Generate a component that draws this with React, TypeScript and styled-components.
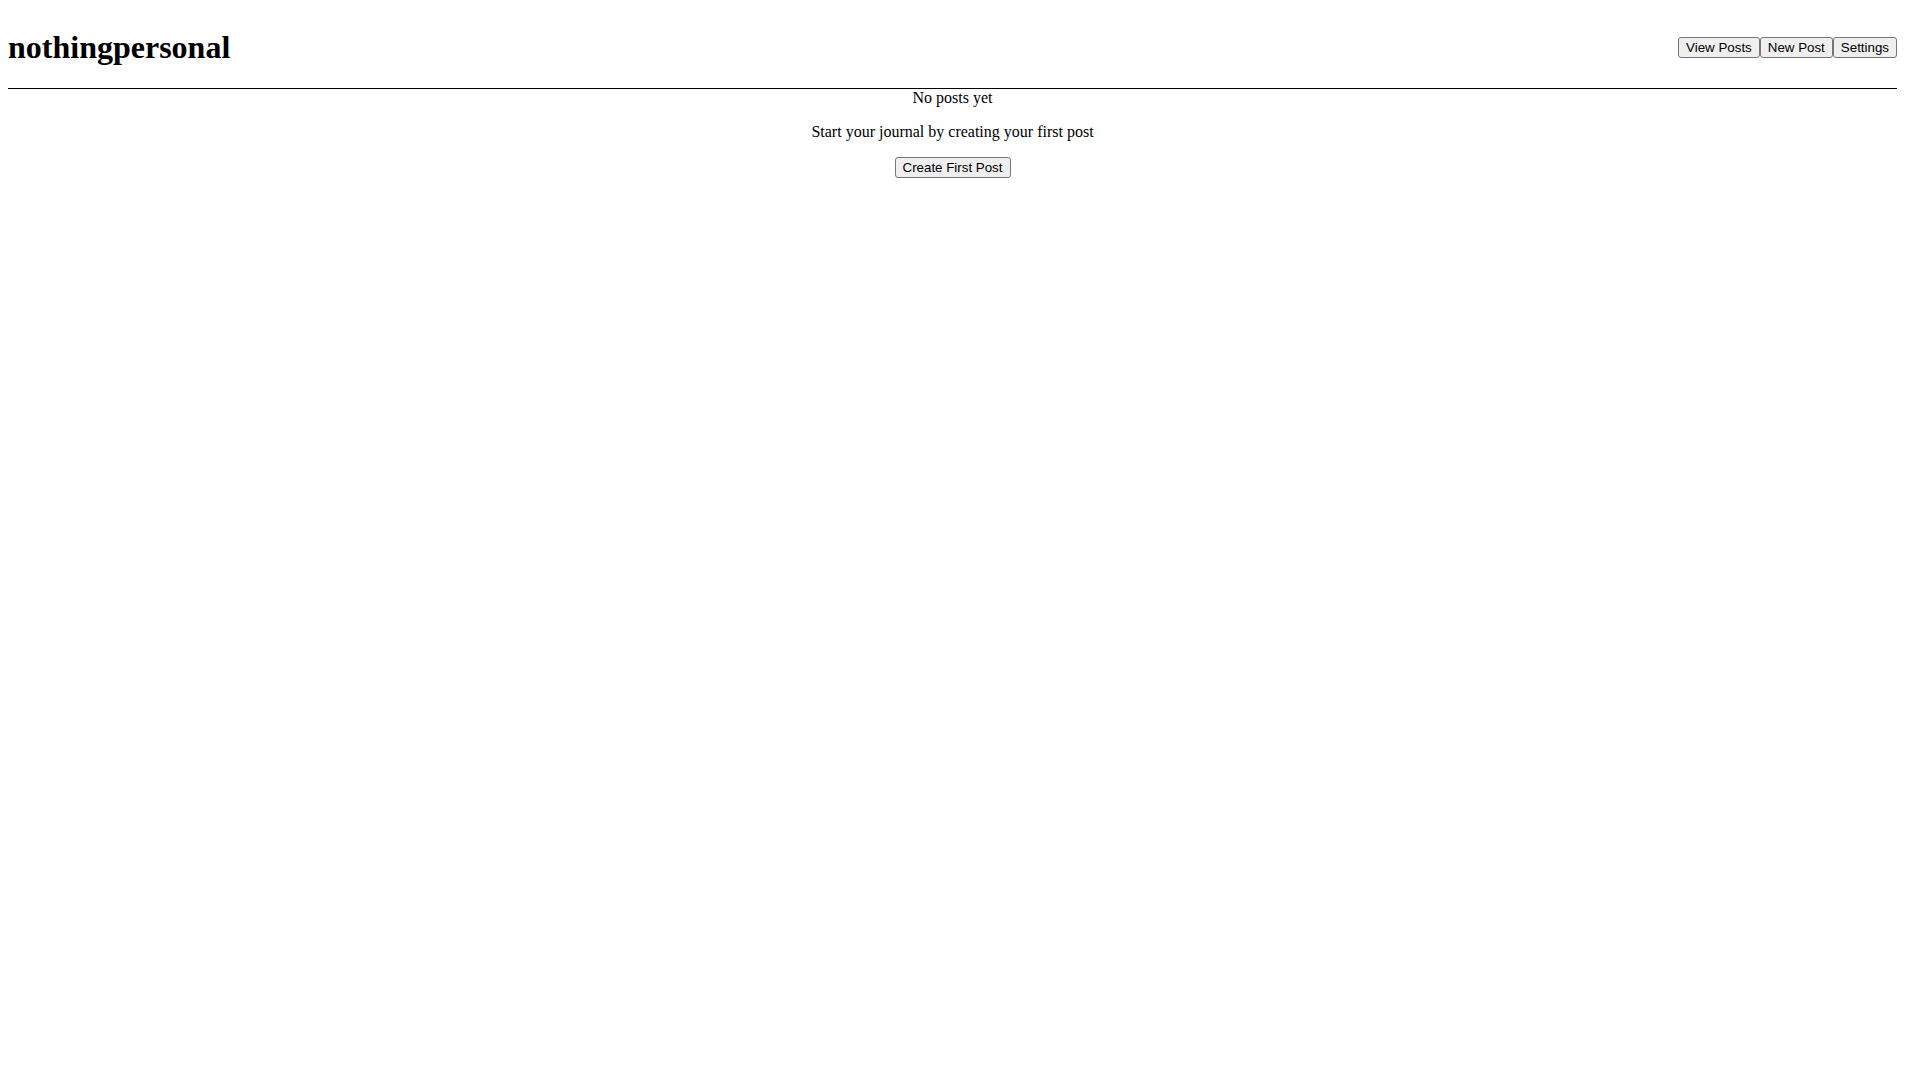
import React from 'react';
import styled, { createGlobalStyle } from 'styled-components';

// the reference was taken with a classic 15px scrollbar; keep that width free
const GlobalStyle = createGlobalStyle`
  body {
    margin: 8px 23px 8px 8px;
    font-family: "Liberation Serif", "Times New Roman", serif;
    font-size: 16px;
    color: #000;
    background: #fff;
  }
`;

const Page = styled.div`
  min-height: 100vh;
`;

const Header = styled.header`
  display: flex;
  justify-content: space-between;
  align-items: center;
  border-bottom: 1px solid #000;
`;

const Logo = styled.h1`
  font-size: 32px;
  font-weight: 700;
  margin: 21.44px 0;
`;

const Nav = styled.nav`
  display: flex;
`;

const Button = styled.button`
  font-family: "Liberation Sans", Arial, sans-serif;
  font-size: 13.333px;
  line-height: 15px;
  padding: 2px 7px;
  color: #000;
  background-color: #efefef;
  border: 1px solid #767676;
  border-radius: 3px;
  cursor: pointer;
`;

const Empty = styled.main`
  text-align: center;
`;

const EmptyTitle = styled.p`
  margin: 0;
`;

const EmptyText = styled.p`
  margin: 16px 0;
`;

export default function App() {
  return (
    <Page>
      <GlobalStyle />
      <Header>
        <Logo>nothingpersonal</Logo>
        <Nav>
          <Button>View Posts</Button>
          <Button>New Post</Button>
          <Button>Settings</Button>
        </Nav>
      </Header>
      <Empty>
        <EmptyTitle>No posts yet</EmptyTitle>
        <EmptyText>Start your journal by creating your first post</EmptyText>
        <Button>Create First Post</Button>
      </Empty>
    </Page>
  );
}
